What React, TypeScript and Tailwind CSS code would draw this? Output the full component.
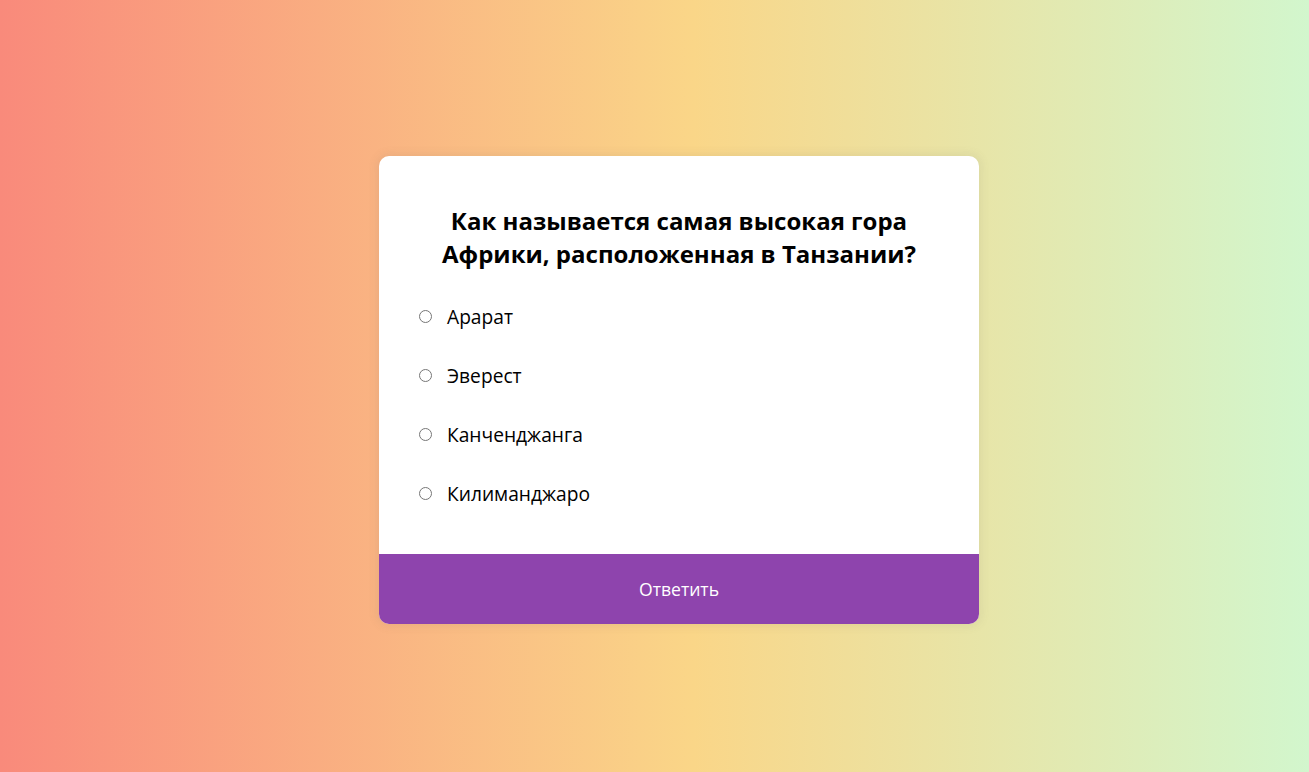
const options = ["Арарат", "Эверест", "Канченджанга", "Килиманджаро"];

export default function App() {
  return (
    <div className="min-h-screen h-[772px] w-full flex items-center justify-center pl-[49px] pt-[8px] bg-[linear-gradient(to_right,#f98a7b_0%,#fad688_53%,#d2f6cd_100%)] font-['Open_Sans',sans-serif]">
      <div className="w-[600px] bg-white rounded-[10px] overflow-hidden shadow-[0_0_10px_2px_rgba(100,100,100,0.1)]">
        <div className="px-8 pt-8 pb-4">
          <h2 className="p-4 text-center text-2xl font-bold leading-[normal] text-black">
            Как называется самая высокая гора Африки, расположенная в Танзании?
          </h2>
          <ul className="mt-[17px] mb-[31px] flex flex-col gap-8">
            {options.map((o, i) => (
              <li key={o} className="flex items-center text-[19.2px] leading-[normal] text-black">
                <input type="radio" name="answer" id={"a" + i} className="ml-2 w-[13px] h-[13px]" />
                <label htmlFor={"a" + i} className="ml-[15px]">{o}</label>
              </li>
            ))}
          </ul>
        </div>
        <button className="block w-full bg-[#8e44ad] text-white text-[17.6px] leading-[normal] py-[23px]">
          Ответить
        </button>
      </div>
    </div>
  );
}
